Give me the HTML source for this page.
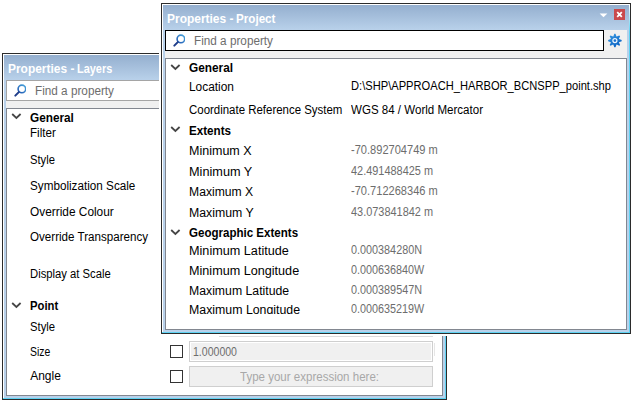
<!DOCTYPE html><html><head><meta charset='utf-8'><style>
html,body{margin:0;padding:0;width:635px;height:404px;overflow:hidden;background:#fff;position:relative}
.a{position:absolute}
.t{position:absolute;white-space:pre;font-family:"Liberation Sans",sans-serif;font-size:12px;line-height:14px;transform-origin:0 0}
</style></head><body>


<div class='a' style='left:2px;top:53px;width:445px;height:347px;background:#2b2b2b'></div>
<div class='a' style='left:3px;top:54px;width:443px;height:345px;background:linear-gradient(#fff 0px,#5fd3f3 28px)'></div>
<div class='a' style='left:3px;top:54px;width:442px;height:344px;background:#fff'></div>
<div class='a' style='left:4px;top:55px;width:441px;height:343px;background:#b9d1ea'></div>
<div class='a' style='left:4px;top:55px;width:441px;height:25px;background:linear-gradient(#94afcf,#b9d1ea)'></div>
<div class='a' style='left:6px;top:80px;width:437px;height:28px;background:#f0f0f0'></div>
<div class='a' style='left:6px;top:108px;width:437px;height:288px;background:#fff;border:1px solid #828790;box-sizing:border-box'></div>

<div class='a' style='left:6px;top:80px;width:440px;height:21px;background:#fff;border:1px solid #a5a5a5;box-sizing:border-box'></div><svg class='a' style='left:12px;top:83px' width='14' height='15' viewBox='0 0 14 15'><defs><linearGradient id='mg6' x1='1' y1='0' x2='0' y2='1'><stop offset='0' stop-color='#4aa6dc'/><stop offset='1' stop-color='#1f56b2'/></linearGradient></defs><circle cx='9.9' cy='5.9' r='3.8' fill='none' stroke='url(#mg6)' stroke-width='1.6'/><path d='M6.8 9.1 L3.3 12.6' stroke='#1f3d8a' stroke-width='2.0' stroke-linecap='round'/></svg>
<div class='a' style='left:170px;top:345px;width:13px;height:13px;border:1px solid #333;box-sizing:border-box;background:#fff'></div>
<div class='a' style='left:170px;top:370px;width:13px;height:13px;border:1px solid #333;box-sizing:border-box;background:#fff'></div>
<div class='a' style='left:189px;top:341px;width:244px;height:21px;border:1px solid #cfcfcf;box-shadow:inset 0 0 0 1px #fff;box-sizing:border-box;background:#f0f0f0'></div>
<div class='a' style='left:189px;top:366px;width:244px;height:21px;border:1px solid #cfcfcf;box-sizing:border-box;background:#f0f0f0'></div>
<div class='a' style='left:219px;top:336px;width:214px;height:1px;background:#dcdcdc'></div>
<div class='a' style='left:434px;top:343px;width:1px;height:13px;background:#e6e6e6'></div>
<div class='t' style='left:8.00px;top:62.24px;color:#fff;font-weight:bold;transform:scaleX(0.9950);'>Properties -</div>
<div class='t' style='left:77.10px;top:62.24px;color:#fff;font-weight:bold;transform:scaleX(0.9110);'>Layers</div>
<div class='t' style='left:34.60px;top:83.64px;color:#6d6d6d;font-weight:normal;transform:scaleX(0.9787);'>Find a property</div>
<div class='t' style='left:30.20px;top:111.24px;color:#000;font-weight:bold;transform:scaleX(0.9820);'>General</div>
<div class='t' style='left:30.20px;top:126.34px;color:#000;font-weight:normal;transform:scaleX(0.9660);'>Filter</div>
<div class='t' style='left:30.20px;top:152.54px;color:#000;font-weight:normal;transform:scaleX(0.9350);'>Style</div>
<div class='t' style='left:30.20px;top:178.94px;color:#000;font-weight:normal;transform:scaleX(0.9750);'>Symbolization Scale</div>
<div class='t' style='left:30.20px;top:204.54px;color:#000;font-weight:normal;transform:scaleX(0.9890);'>Override Colour</div>
<div class='t' style='left:30.20px;top:229.64px;color:#000;font-weight:normal;transform:scaleX(0.9670);'>Override Transparency</div>
<div class='t' style='left:30.20px;top:267.24px;color:#000;font-weight:normal;transform:scaleX(0.9390);'>Display at Scale</div>
<div class='t' style='left:30.20px;top:299.04px;color:#000;font-weight:bold;transform:scaleX(0.9390);'>Point</div>
<div class='t' style='left:30.20px;top:319.64px;color:#000;font-weight:normal;transform:scaleX(0.9380);'>Style</div>
<div class='t' style='left:30.20px;top:344.94px;color:#000;font-weight:normal;transform:scaleX(0.8700);'>Size</div>
<div class='t' style='left:30.20px;top:369.44px;color:#000;font-weight:normal;transform:scaleX(1.0000);'>Angle</div>
<div class='t' style='left:192.70px;top:344.84px;color:#6d6d6d;font-weight:normal;transform:scaleX(0.8789);'>1.000000</div>
<div class='t' style='left:240.00px;top:369.74px;color:#a8a8a8;font-weight:normal;transform:scaleX(0.9603);'>Type your expression here:</div>
<svg class='a' style='left:11px;top:112.30px' width='11' height='8' viewBox='0 0 11 8'><path d='M1.2 2 L5.4 6 L9.6 2' fill='none' stroke='#454545' stroke-width='1.75'/></svg>
<svg class='a' style='left:11px;top:300.60px' width='11' height='8' viewBox='0 0 11 8'><path d='M1.2 2 L5.4 6 L9.6 2' fill='none' stroke='#454545' stroke-width='1.75'/></svg>
<div class='a' style='left:159px;top:1px;width:474px;height:335px;background:#fff'></div>

<div class='a' style='left:161px;top:3px;width:470px;height:331px;background:#2b2b2b'></div>
<div class='a' style='left:162px;top:4px;width:468px;height:329px;background:linear-gradient(#fff 0px,#5fd3f3 28px)'></div>
<div class='a' style='left:162px;top:4px;width:467px;height:328px;background:#fff'></div>
<div class='a' style='left:163px;top:5px;width:466px;height:327px;background:#b9d1ea'></div>
<div class='a' style='left:163px;top:5px;width:466px;height:25px;background:linear-gradient(#94afcf,#b9d1ea)'></div>
<div class='a' style='left:165px;top:30px;width:462px;height:28px;background:#f0f0f0'></div>
<div class='a' style='left:165px;top:58px;width:462px;height:272px;background:#fff;border:1px solid #828790;box-sizing:border-box'></div>

<div class='a' style='left:165px;top:30px;width:439px;height:21px;background:#fff;border:1px solid #000;box-sizing:border-box'></div><svg class='a' style='left:171px;top:33px' width='14' height='15' viewBox='0 0 14 15'><defs><linearGradient id='mg165' x1='1' y1='0' x2='0' y2='1'><stop offset='0' stop-color='#4aa6dc'/><stop offset='1' stop-color='#1f56b2'/></linearGradient></defs><circle cx='9.9' cy='5.9' r='3.8' fill='none' stroke='url(#mg165)' stroke-width='1.6'/><path d='M6.8 9.1 L3.3 12.6' stroke='#1f3d8a' stroke-width='2.0' stroke-linecap='round'/></svg>
<svg class='a' style='left:0;top:0' width='635' height='404'><defs><linearGradient id='gg' x1='0' y1='0' x2='0.6' y2='1'><stop offset='0' stop-color='#3a9ae2'/><stop offset='1' stop-color='#0b63c4'/></linearGradient></defs><path d='M613.35 36.48 L614.29 33.83 L615.51 33.83 L616.45 36.48 L616.72 36.59 L619.26 35.38 L620.12 36.24 L618.91 38.78 L619.02 39.05 L621.67 39.99 L621.67 41.21 L619.02 42.15 L618.91 42.42 L620.12 44.96 L619.26 45.82 L616.72 44.61 L616.45 44.72 L615.51 47.37 L614.29 47.37 L613.35 44.72 L613.08 44.61 L610.54 45.82 L609.68 44.96 L610.89 42.42 L610.78 42.15 L608.13 41.21 L608.13 39.99 L610.78 39.05 L610.89 38.78 L609.68 36.24 L610.54 35.38 L613.08 36.59Z' fill='url(#gg)'/><circle cx='614.9' cy='40.6' r='2.0' fill='#1a6fcc' stroke='#eef6fd' stroke-width='1.2'/></svg>
<div class='a' style='left:614px;top:9px;width:11px;height:11px;background:#c94a4c'></div>
<svg class='a' style='left:614px;top:9px' width='11' height='11'><path d='M3.2 3.2 L7.8 7.8 M7.8 3.2 L3.2 7.8' stroke='#fff' stroke-width='1.8'/></svg>
<svg class='a' style='left:599px;top:12.6px' width='9' height='7'><path d='M0.6 0.4 L8.4 0.4 L4.5 4.3Z' fill='#fff'/></svg>
<div class='a' style='left:166px;top:59px;width:460px;height:255px;overflow:hidden'><div class='a' style='left:-166px;top:-59px;width:635px;height:404px'>
<div class='t' style='left:189.20px;top:61.44px;color:#000;font-weight:bold;transform:scaleX(0.9843);'>General</div>
<div class='t' style='left:189.20px;top:79.84px;color:#000;font-weight:normal;transform:scaleX(0.9917);'>Location</div>
<div class='t' style='left:350.60px;top:78.84px;color:#000;font-weight:normal;transform:scaleX(0.9282);'>D:\SHP\APPROACH_HARBOR_BCNSPP_point.shp</div>
<div class='t' style='left:189.20px;top:102.64px;color:#000;font-weight:normal;transform:scaleX(0.9543);'>Coordinate Reference System</div>
<div class='t' style='left:350.60px;top:102.64px;color:#000;font-weight:normal;transform:scaleX(0.9624);'>WGS 84 / World Mercator</div>
<div class='t' style='left:189.20px;top:123.74px;color:#000;font-weight:bold;transform:scaleX(0.9686);'>Extents</div>
<div class='t' style='left:189.20px;top:143.84px;color:#000;font-weight:normal;transform:scaleX(1.0431);'>Minimum X</div>
<div class='t' style='left:350.60px;top:142.84px;color:#6d6d6d;font-weight:normal;transform:scaleX(0.9226);'>-70.892704749 m</div>
<div class='t' style='left:189.20px;top:165.44px;color:#000;font-weight:normal;transform:scaleX(1.0590);'>Minimum Y</div>
<div class='t' style='left:350.60px;top:164.14px;color:#6d6d6d;font-weight:normal;transform:scaleX(0.9103);'>42.491488425 m</div>
<div class='t' style='left:189.20px;top:185.04px;color:#000;font-weight:normal;transform:scaleX(1.0130);'>Maximum X</div>
<div class='t' style='left:350.60px;top:183.54px;color:#6d6d6d;font-weight:normal;transform:scaleX(0.9226);'>-70.712268346 m</div>
<div class='t' style='left:189.20px;top:206.44px;color:#000;font-weight:normal;transform:scaleX(1.0260);'>Maximum Y</div>
<div class='t' style='left:350.60px;top:205.44px;color:#6d6d6d;font-weight:normal;transform:scaleX(0.9103);'>43.073841842 m</div>
<div class='t' style='left:189.20px;top:226.04px;color:#000;font-weight:bold;transform:scaleX(0.9620);'>Geographic Extents</div>
<div class='t' style='left:189.20px;top:243.74px;color:#000;font-weight:normal;transform:scaleX(1.0540);'>Minimum Latitude</div>
<div class='t' style='left:350.60px;top:242.74px;color:#6d6d6d;font-weight:normal;transform:scaleX(0.9016);'>0.000384280N</div>
<div class='t' style='left:189.20px;top:263.64px;color:#000;font-weight:normal;transform:scaleX(1.0520);'>Minimum Longitude</div>
<div class='t' style='left:350.60px;top:263.14px;color:#6d6d6d;font-weight:normal;transform:scaleX(0.9004);'>0.000636840W</div>
<div class='t' style='left:189.20px;top:284.34px;color:#000;font-weight:normal;transform:scaleX(1.0210);'>Maximum Latitude</div>
<div class='t' style='left:350.60px;top:283.34px;color:#6d6d6d;font-weight:normal;transform:scaleX(0.9016);'>0.000389547N</div>
<div class='t' style='left:189.20px;top:302.74px;color:#000;font-weight:normal;transform:scaleX(1.0280);'>Maximum Longitude</div>
<div class='t' style='left:350.60px;top:301.74px;color:#6d6d6d;font-weight:normal;transform:scaleX(0.9004);'>0.000635219W</div>
<svg class='a' style='left:170px;top:62.80px' width='11' height='8' viewBox='0 0 11 8'><path d='M1.2 2 L5.4 6 L9.6 2' fill='none' stroke='#454545' stroke-width='1.75'/></svg>
<svg class='a' style='left:170px;top:124.90px' width='11' height='8' viewBox='0 0 11 8'><path d='M1.2 2 L5.4 6 L9.6 2' fill='none' stroke='#454545' stroke-width='1.75'/></svg>
<svg class='a' style='left:170px;top:228.10px' width='11' height='8' viewBox='0 0 11 8'><path d='M1.2 2 L5.4 6 L9.6 2' fill='none' stroke='#454545' stroke-width='1.75'/></svg>
</div></div>
<div class='t' style='left:167.00px;top:12.24px;color:#fff;font-weight:bold;transform:scaleX(0.9970);'>Properties -</div>
<div class='t' style='left:236.00px;top:12.24px;color:#fff;font-weight:bold;transform:scaleX(0.9700);'>Project</div>
<div class='t' style='left:193.90px;top:33.64px;color:#6d6d6d;font-weight:normal;transform:scaleX(0.9787);'>Find a property</div>
</body></html>
